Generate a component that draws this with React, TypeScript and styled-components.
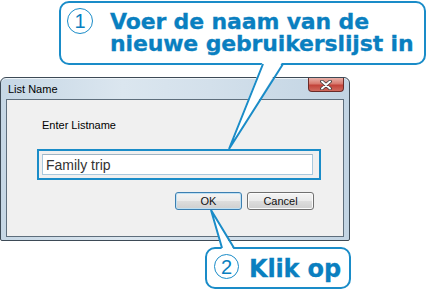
import React from 'react'
import styled, { createGlobalStyle } from 'styled-components'

const BLUE = '#1a8cc8'
const INK = '#0a7fc0'

const GlobalStyle = createGlobalStyle`
    html, body {
        margin: 0;
        padding: 0;
        background: #ffffff;
    }
    body {
        font-family: 'Liberation Sans', Arial, sans-serif;
    }
`

const Page = styled.div`
    position: relative;
    width: 428px;
    height: 290px;
    overflow: hidden;
    display: flex;
    flex-direction: column;
    align-items: flex-start;
`

type BoxProps = { $left: number; $top: number; $width: number; $height: number; $pad: string }

const Callout = styled.div<BoxProps>`
    box-sizing: border-box;
    margin: ${({ $top }) => $top}px 0 0 ${({ $left }) => $left}px;
    width: ${({ $width }) => $width}px;
    height: ${({ $height }) => $height}px;
    padding: ${({ $pad }) => $pad};
    border: 2px solid ${BLUE};
    border-radius: 10px;
    background: #ffffff;
    display: flex;
    align-items: flex-start;
`

const Step = styled.div<{ $size: number }>`
    box-sizing: border-box;
    width: ${({ $size }) => $size}px;
    height: ${({ $size }) => $size}px;
    flex: none;
    border: 1.5px solid ${BLUE};
    border-radius: 50%;
    display: flex;
    align-items: center;
    justify-content: center;
    color: ${INK};
    font-size: 20px;
    line-height: 1;
`

const Heading = styled.div<{ $size: number; $gap: number; $top: number; $lh: number }>`
    margin: ${({ $top }) => $top}px 0 0 ${({ $gap }) => $gap}px;
    color: ${INK};
    font-family: 'DejaVu Sans', 'Liberation Sans', sans-serif;
    font-weight: 700;
    font-size: ${({ $size }) => $size}px;
    line-height: ${({ $lh }) => $lh}px;
    letter-spacing: -0.15px;
    -webkit-text-stroke: 0.3px ${INK};
    white-space: nowrap;
`

const Dialog = styled.div`
    box-sizing: border-box;
    margin: 12px 0 0 0;
    width: 350px;
    height: 164px;
    border: 1px solid #3d4a56;
    border-radius: 6px 6px 2px 2px;
    background: linear-gradient(90deg, #c6d7e5 0%, #dbe6ef 35%, #d3e0eb 60%, #c2d4e3 100%);
    box-shadow: inset 0 1px 0 #eef4f8;
    display: flex;
    flex-direction: column;
`

const TitleBar = styled.div`
    height: 21px;
    flex: none;
    display: flex;
    justify-content: space-between;
    align-items: flex-start;
`

const Title = styled.div`
    margin: 5px 0 0 7px;
    font-size: 11px;
    line-height: 13px;
    color: #000000;
`

const CloseButton = styled.div`
    box-sizing: border-box;
    margin-right: 5px;
    width: 36px;
    height: 14px;
    border: 1px solid #6a2b28;
    border-top: none;
    border-radius: 0 0 4px 4px;
    background: linear-gradient(180deg, #e9b1a9 0%, #d8786d 45%, #c2433a 55%, #d06a5e 100%);
    display: flex;
    align-items: center;
    justify-content: center;
`

const Client = styled.div`
    box-sizing: border-box;
    margin: 0 5px;
    height: 138px;
    flex: none;
    border: 1px solid #5e6e7c;
    background: #f0f0f0;
    display: flex;
    flex-direction: column;
    align-items: flex-start;
    padding: 19px 0 0 30px;
`

const Label = styled.div`
    margin-left: 5px;
    font-size: 11px;
    line-height: 13px;
    color: #000000;
`

const Highlight = styled.div`
    box-sizing: border-box;
    margin-top: 17px;
    width: 284px;
    height: 31px;
    border: 2px solid ${BLUE};
    padding: 3px 0 0 3px;
`

const NameInput = styled.input`
    box-sizing: border-box;
    display: block;
    width: 271px;
    height: 21px;
    margin: 0;
    padding: 0 3px;
    border: 1px solid #a9c9de;
    border-top-color: #9fb4c4;
    background: #ffffff;
    outline: none;
    font-family: 'Liberation Sans', Arial, sans-serif;
    font-size: 14px;
    color: #333333;
`

const ButtonRow = styled.div`
    box-sizing: border-box;
    align-self: stretch;
    margin-top: 12px;
    padding-right: 29px;
    display: flex;
    justify-content: flex-end;
    gap: 5px;
`

const Button = styled.div<{ $focused?: boolean }>`
    box-sizing: border-box;
    width: 67px;
    height: 18px;
    border: 1px solid ${({ $focused }) => ($focused ? '#3c7fb1' : '#707070')};
    border-radius: 3px;
    background: linear-gradient(180deg, #f4f4f4 0%, #ebebeb 48%, #dddddd 52%, #cfcfcf 100%);
    box-shadow: inset 0 0 0 1px ${({ $focused }) => ($focused ? '#bfe0f3' : '#fbfbfb')};
    display: flex;
    align-items: center;
    justify-content: center;
    font-size: 11px;
    color: #111111;
`

const Tails = styled.svg`
    position: absolute;
    left: 0;
    top: 0;
    width: 428px;
    height: 290px;
    pointer-events: none;
`

export default function App() {
    return (
        <>
            <GlobalStyle />
            <Page>
                <Callout $left={59} $top={1} $width={367} $height={64} $pad="5px 0 0 6px">
                    <Step $size={26}>1</Step>
                    <Heading $size={22} $lh={22} $gap={17} $top={3}>
                        Voer de naam van de
                        <br />
                        nieuwe gebruikerslijst in
                    </Heading>
                </Callout>

                <Dialog>
                    <TitleBar>
                        <Title>List Name</Title>
                        <CloseButton>
                            <svg width="12" height="10" viewBox="0 0 12 10">
                                <path d="M2 1.5 L10 8.5 M10 1.5 L2 8.5" stroke="#3a3a3a" strokeWidth="3.6" strokeLinecap="round" />
                                <path d="M2 1.5 L10 8.5 M10 1.5 L2 8.5" stroke="#ffffff" strokeWidth="2" strokeLinecap="round" />
                            </svg>
                        </CloseButton>
                    </TitleBar>
                    <Client>
                        <Label>Enter Listname</Label>
                        <Highlight>
                            <NameInput defaultValue="Family trip" readOnly />
                        </Highlight>
                        <ButtonRow>
                            <Button $focused>OK</Button>
                            <Button>Cancel</Button>
                        </ButtonRow>
                    </Client>
                </Dialog>

                <Callout $left={205} $top={6} $width={146} $height={42} $pad="5px 0 0 7px">
                    <Step $size={25}>2</Step>
                    <Heading $size={24} $lh={25} $gap={10} $top={3}>
                        Klik op
                    </Heading>
                </Callout>

                <Tails viewBox="0 0 428 290">
                    <polygon points="263,61 283,61 229,148" fill="#ffffff" />
                    <path d="M263 64 L229 149 L283 64" fill="none" stroke={BLUE} strokeWidth="2" strokeLinejoin="miter" />
                    <polygon points="222,250 234,250 211,211" fill="#ffffff" />
                    <path d="M222 248 L211 210 L234 248" fill="none" stroke={BLUE} strokeWidth="2" strokeLinejoin="miter" />
                </Tails>
            </Page>
        </>
    )
}
